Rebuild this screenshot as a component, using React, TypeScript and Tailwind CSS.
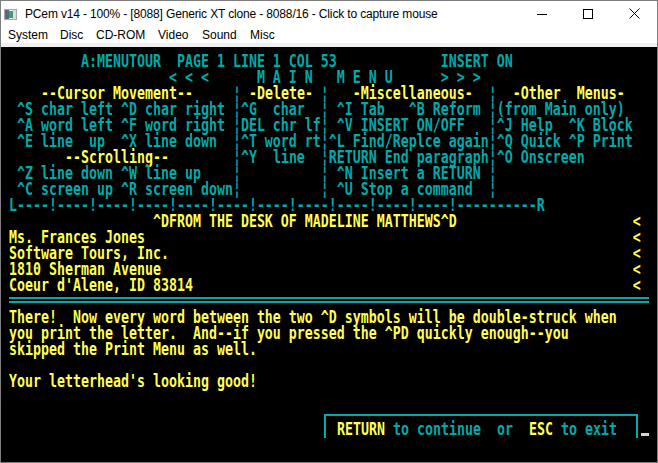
import React from "react";

type Seg = [string, "c" | "y"];

const sp = (n: number) => " ".repeat(n);
const B = "¦";

const top: Seg[][] = [
  [[sp(9) + "A:MENUTOUR  PAGE 1 LINE 1 COL 53" + sp(13) + "INSERT ON", "c"]],
  [[sp(20) + "< < <" + sp(6) + "M A I N" + sp(3) + "M E N U" + sp(6) + "> > >", "c"]],
  [
    [sp(4), "c"],
    ["--Cursor Movement--", "y"],
    [sp(5) + B + " ", "c"],
    ["-Delete-", "y"],
    [" " + B + sp(3), "c"],
    ["-Miscellaneous-", "y"],
    [sp(2) + B + sp(2), "c"],
    ["-Other  Menus-", "y"],
  ],
  [[" ^S char left ^D char right " + B + "^G  char  " + B + " ^I Tab   ^B Reform " + B + "(from Main only)", "c"]],
  [[" ^A word left ^F word right " + B + "DEL chr lf" + B + " ^V INSERT ON/OFF   " + B + "^J Help  ^K Block", "c"]],
  [[" ^E line  up  ^X line down  " + B + "^T word rt" + B + "^L Find/Replce again" + B + "^Q Quick ^P Print", "c"]],
  [
    [sp(7), "c"],
    ["--Scrolling--", "y"],
    [sp(8) + B + "^Y  line  " + B + "RETURN End paragraph" + B + "^O Onscreen", "c"],
  ],
  [[" ^Z line down ^W line up    " + B + sp(10) + B + " ^N Insert a RETURN " + B, "c"]],
  [[" ^C screen up ^R screen down" + B + sp(10) + B + " ^U Stop a command  " + B, "c"]],
  [["L" + "----!".repeat(11) + "----------R", "c"]],
  [[sp(18) + "^DFROM THE DESK OF MADELINE MATTHEWS^D" + sp(22) + "<", "y"]],
  ...["Ms. Frances Jones", "Software Tours, Inc.", "1810 Sherman Avenue", "Coeur d'Alene, ID 83814"].map(
    (t) => [[t.padEnd(78, " ") + "<", "y"]] as Seg[]
  ),
];

const body: string[] = [
  "There!  Now every word between the two ^D symbols will be double-struck when",
  "you print the letter.  And--if you pressed the ^PD quickly enough--you",
  "skipped the Print Menu as well.",
  "",
  "Your letterhead's looking good!",
  "",
];

function TextRow({ segs }: { segs: Seg[] }) {
  return (
    <div className="h-4 whitespace-pre">
      <span className="inline-block align-top mt-[2px] h-[12px] leading-[12px] scale-y-[1.3]">
        {segs.map(([t, c], i) => (
          <span key={i} className={c === "y" ? "text-[#ffff55]" : "text-[#00aaaa]"}>
            {t}
          </span>
        ))}
      </span>
    </div>
  );
}

function AppIcon() {
  return (
    <svg width="13" height="11" viewBox="0 0 13 11">
      <rect x="0.5" y="0.5" width="12" height="10" fill="#f2f2f2" stroke="#a8a8a8" />
      <rect x="1" y="1" width="4" height="9" fill="#4f6f7e" />
      <rect x="5" y="2" width="4" height="7" fill="#3f9d72" />
      <rect x="9" y="1" width="3" height="9" fill="#dcdcdc" />
    </svg>
  );
}

export default function App() {
  const menus: [string, string][] = [
    ["System", "w-[52px]"],
    ["Disc", "w-[36px]"],
    ["CD-ROM", "w-[62px]"],
    ["Video", "w-[44px]"],
    ["Sound", "w-[48px]"],
    ["Misc", "w-[40px]"],
  ];
  return (
    <div className="w-[658px] h-[463px] border border-[#7f7f7f] bg-white flex flex-col overflow-hidden">
      {/* title bar */}
      <div className="h-[25px] flex items-center shrink-0 font-['Liberation_Sans',sans-serif] text-[12px] text-black">
        <div className="ml-[3px] mt-[2px] flex">
          <AppIcon />
        </div>
        <div className="ml-[8px] flex-1 whitespace-nowrap tracking-[-0.15px]">
          PCem v14 - 100% - [8088] Generic XT clone - 8088/16 - Click to capture mouse
        </div>
        <div className="w-[46px] h-full flex items-center justify-center">
          <svg width="10" height="10" viewBox="0 0 10 10">
            <line x1="0" y1="5.5" x2="10" y2="5.5" stroke="#000" strokeWidth="1" />
          </svg>
        </div>
        <div className="w-[46px] h-full flex items-center justify-center">
          <svg width="10" height="10" viewBox="0 0 10 10">
            <rect x="0.5" y="0.5" width="9" height="9" fill="none" stroke="#000" strokeWidth="1" />
          </svg>
        </div>
        <div className="w-[46px] h-full flex items-center justify-center">
          <svg width="11" height="11" viewBox="0 0 11 11">
            <line x1="0.5" y1="0.5" x2="10.5" y2="10.5" stroke="#000" strokeWidth="1" />
            <line x1="10.5" y1="0.5" x2="0.5" y2="10.5" stroke="#000" strokeWidth="1" />
          </svg>
        </div>
      </div>
      {/* menu bar */}
      <div className="h-[17px] flex items-center shrink-0 font-['Liberation_Sans',sans-serif] text-[12px] text-black">
        {menus.map(([m, w]) => (
          <div key={m} className={`${w} pl-[7px] whitespace-nowrap`}>
            {m}
          </div>
        ))}
      </div>
      <div className="h-[4px] bg-[#f0f0f0] shrink-0" />
      {/* emulated screen */}
      <div className="flex-1 bg-black pl-[8px] pt-[7px] font-['DejaVu_Sans_Mono',monospace] font-bold text-[13.29px]">
        {top.map((segs, i) => (
          <TextRow key={i} segs={segs} />
        ))}
        <div className="h-4 pt-[3px]">
          <div className="h-[2px] w-[640px] bg-[#00aaaa]" />
          <div className="mt-[2px] h-[2px] w-[640px] bg-[#00aaaa]" />
        </div>
        {body.map((t, i) => (
          <TextRow key={i} segs={[[t, "y"]]} />
        ))}
        <div className="flex h-8">
          <div className="w-[315px] shrink-0" />
          <div className="mt-2 h-6 w-[314px] shrink-0 border-x-2 border-t-2 border-[#00aaaa] pl-[11px] pt-[6px]">
            <TextRow
              segs={[
                ["RETURN", "y"],
                [" to continue  or  ", "c"],
                ["ESC", "y"],
                [" to exit", "c"],
              ]}
            />
          </div>
          <div className="w-[3px] shrink-0" />
          <div className="mt-[27px] h-[3px] w-[8px] shrink-0 bg-[#d4d4d4]" />
        </div>
      </div>
    </div>
  );
}
